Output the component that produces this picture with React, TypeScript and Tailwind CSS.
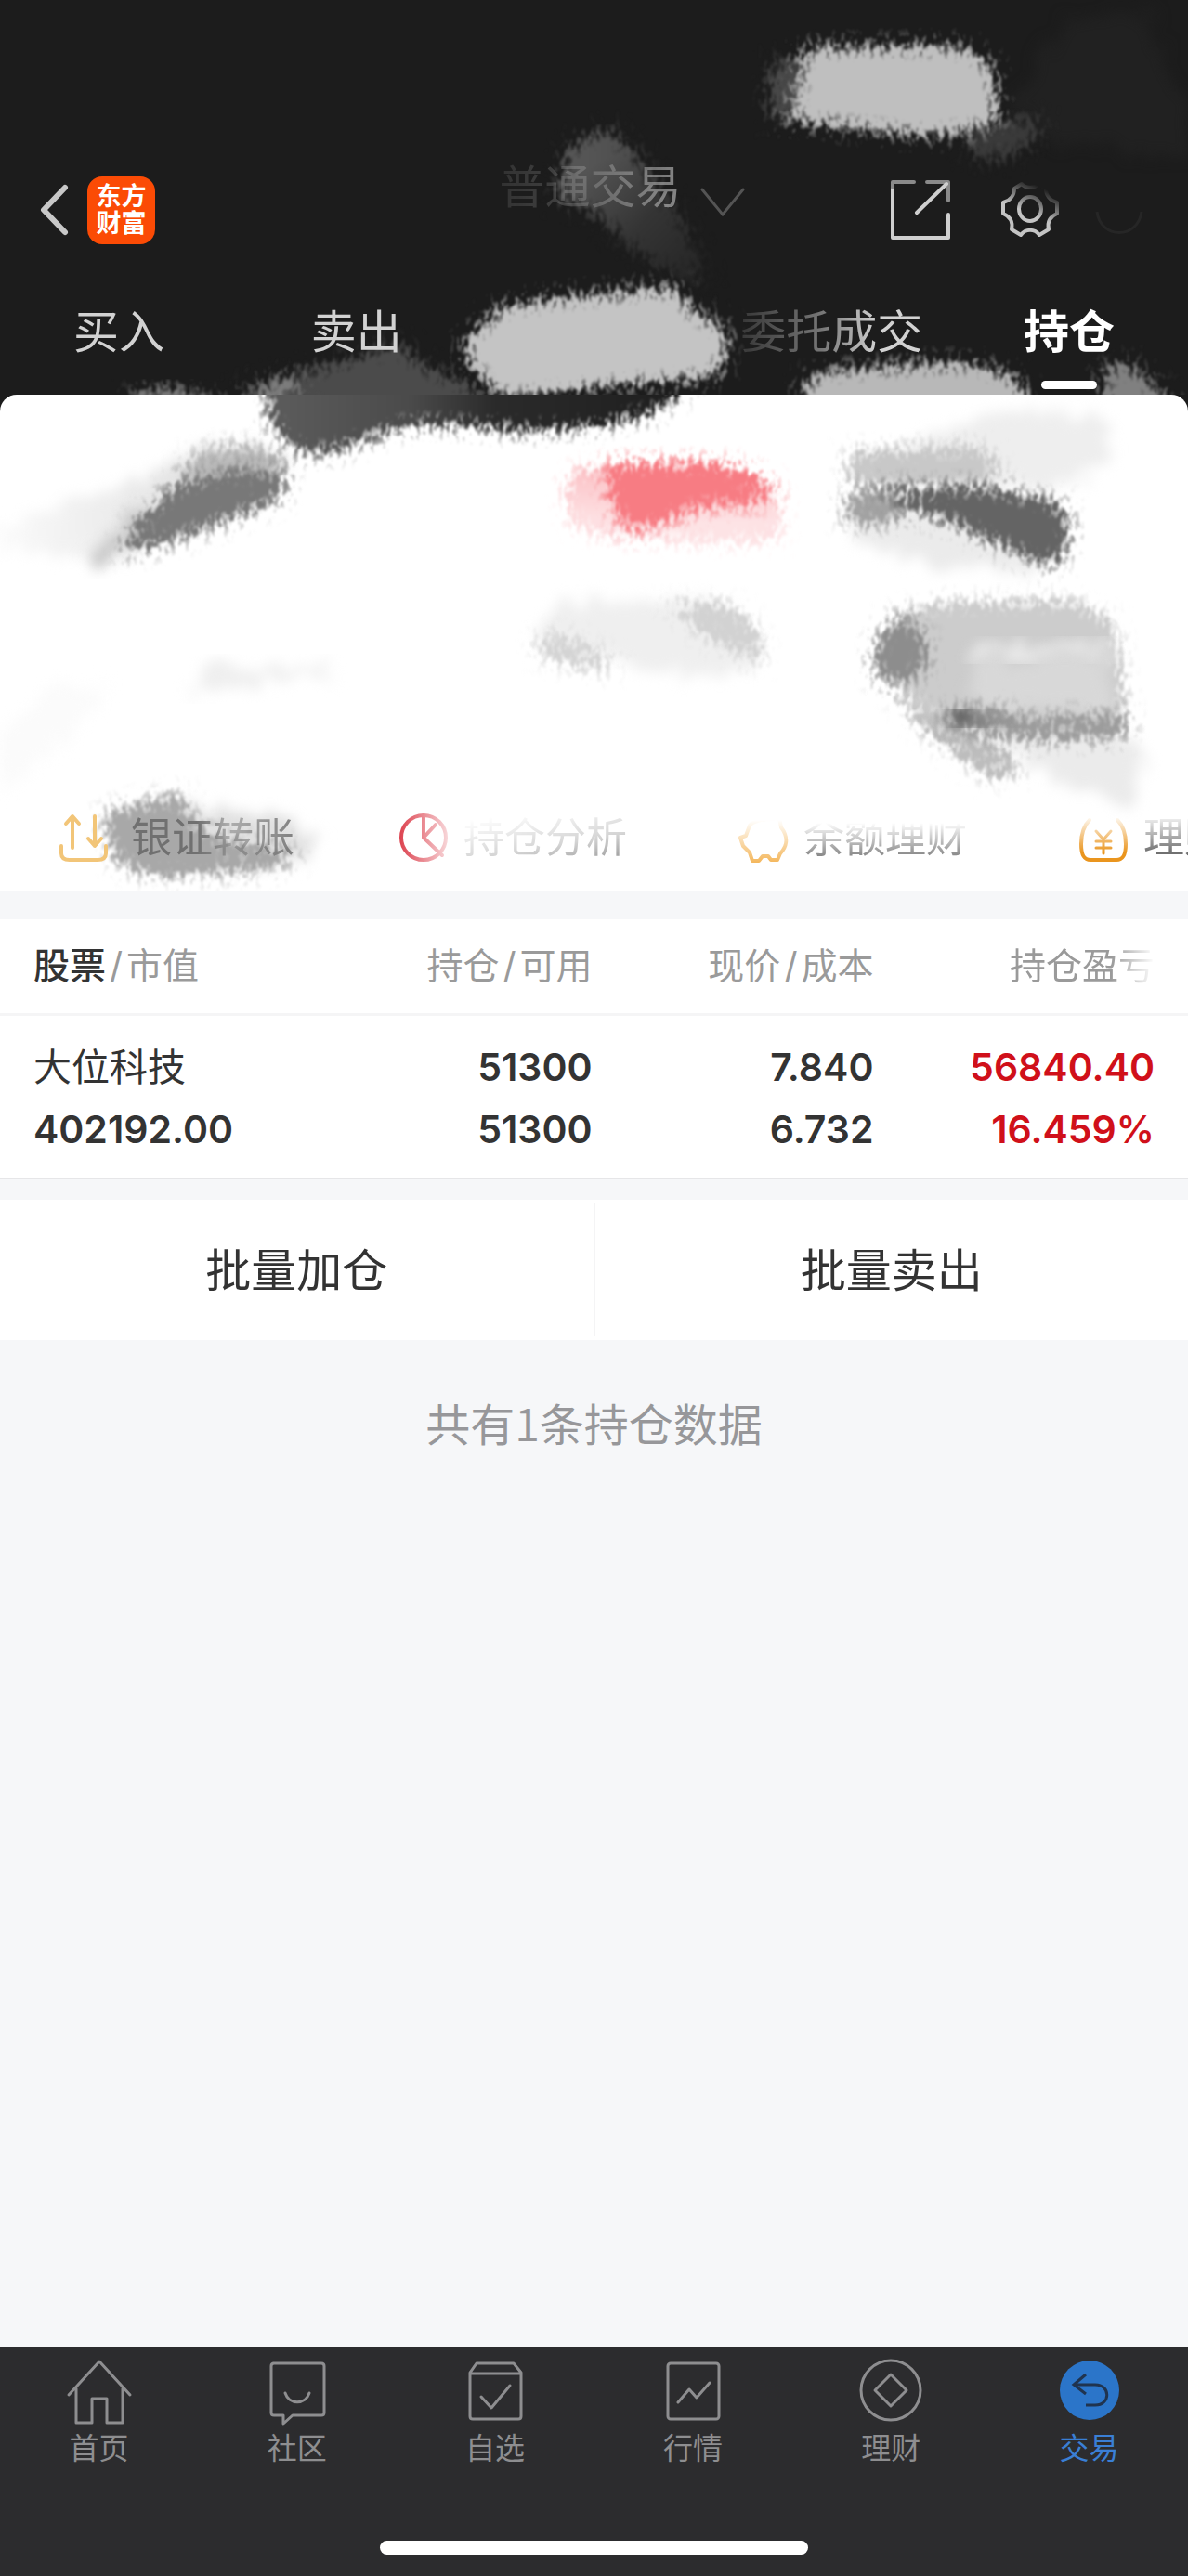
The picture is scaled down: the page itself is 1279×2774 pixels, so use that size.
import React from "react";

function SmearFilters() {
  return (
    <defs>
      <filter id="brush" x="-30%" y="-60%" width="160%" height="220%" colorInterpolationFilters="sRGB">
        <feTurbulence type="fractalNoise" baseFrequency="0.19 0.1" numOctaves="3" seed="4" result="noise" />
        <feColorMatrix in="noise" type="matrix" values="0 0 0 0 0  0 0 0 0 0  0 0 0 0 0  3.4 0 0 0 -1.2" result="grain" />
        <feGaussianBlur in="SourceGraphic" stdDeviation="11" result="soft" />
        <feComposite in="soft" in2="grain" operator="arithmetic" k1="0" k2="2.1" k3="1" k4="-0.98" result="mask" />
        <feMorphology in="SourceGraphic" operator="dilate" radius="20" result="wide" />
        <feComposite in="wide" in2="mask" operator="in" result="painted" />
        <feGaussianBlur in="painted" stdDeviation="1" />
      </filter>
      <filter id="haze" x="-20%" y="-40%" width="140%" height="180%" colorInterpolationFilters="sRGB">
        <feTurbulence type="fractalNoise" baseFrequency="0.06 0.04" numOctaves="3" seed="9" result="noise" />
        <feDisplacementMap in="SourceGraphic" in2="noise" scale="44" xChannelSelector="R" yChannelSelector="G" result="moved" />
        <feGaussianBlur in="moved" stdDeviation="7" />
      </filter>
      <linearGradient id="darkFade" x1="0" x2="1" y1="0" y2="0">
        <stop offset="0" stopColor="#5a5a5a" />
        <stop offset="0.3" stopColor="#4a4a4a" />
        <stop offset="0.5" stopColor="#2a2a2a" />
        <stop offset="1" stopColor="#1c1c1c" />
      </linearGradient>
      <linearGradient id="streak" x1="0" x2="1" y1="0" y2="1">
        <stop offset="0" stopColor="#5e5e5e" />
        <stop offset="0.45" stopColor="#343434" />
        <stop offset="1" stopColor="#1c1c1c" />
      </linearGradient>
      <linearGradient id="pinkFade" x1="0" x2="0" y1="0" y2="1">
        <stop offset="0" stopColor="#fab4b9" />
        <stop offset="1" stopColor="#fde3e5" />
      </linearGradient>
      <linearGradient id="washLeft" x1="0" x2="1" y1="0" y2="0">
        <stop offset="0" stopColor="#fafafa" />
        <stop offset="0.5" stopColor="#e9e9e9" />
        <stop offset="1" stopColor="#dadada" />
      </linearGradient>
    </defs>
  );
}

function HeaderSmears() {
  return (
    <svg className="pointer-events-none absolute inset-0 h-full w-full" viewBox="0 0 1279 425" preserveAspectRatio="none" aria-hidden="true">
      <SmearFilters />
      <path d="M1150 20L1230 10L1279 120V170L1110 150L1090 110Z" fill="#212121" filter="url(#haze)" />
      <path d="M1030 130L1125 128L1110 155L1075 172L1045 165Z" fill="#3a3a3a" filter="url(#brush)" />
      <path d="M832 66L890 60L890 128L828 130Z" fill="#484848" filter="url(#brush)" />
      <path d="M864 52L1030 50L1068 70L1074 134L1040 140L1000 146L930 138L845 128L862 95Z" fill="#bfbfbf" filter="url(#brush)" />
      <path d="M600 215L612 160L655 138L685 168L718 215L738 245L766 315L690 275L640 226Z" fill="url(#streak)" filter="url(#brush)" />
      <path d="M542 330L620 320L730 310L744 336L784 354L776 404L720 410L640 416L543 430L520 408L500 385L503 366Z" fill="#c4c4c4" filter="url(#brush)" />
      <path d="M130 440L150 420L200 420L260 440Z" fill="#777" filter="url(#brush)" />
      <path d="M258 455V422L300 406L370 390L432 370L452 393L510 418L540 455Z" fill="#4b4b4b" filter="url(#brush)" />
      <path d="M264 440L285 416L330 402L305 440Z" fill="#7c7c7c" filter="url(#brush)" />
      <path d="M864 455V413L890 400L1000 392L1050 392L1094 408L1120 455Z" fill="#b8b8b8" filter="url(#brush)" />
      <path d="M1182 400L1212 390L1275 445H1196Z" fill="#808080" filter="url(#brush)" />
    </svg>
  );
}

function CardSmears() {
  return (
    <svg className="pointer-events-none absolute inset-0 h-full w-full" viewBox="0 425 1279 535" preserveAspectRatio="none" aria-hidden="true">
      <path d="M284 380L290 452L320 488L358 486L438 456L520 458L560 463L640 459L705 443L742 415V380Z" fill="url(#darkFade)" filter="url(#brush)" />

      <path d="M0 565L100 535L190 495L240 482L300 488L300 515L200 560L90 600L0 590Z" fill="url(#washLeft)" filter="url(#haze)" />
      <path d="M185 530L208 490L260 478L308 492L302 530Z" fill="#b8b8b8" filter="url(#brush)" />
      <path d="M90 600L150 550L190 550L130 602Z" fill="#c9c9c9" filter="url(#haze)" />
      <path d="M190 522L250 508L304 508L309 530L285 543L250 558L180 584L130 598L140 574Z" fill="#787878" filter="url(#brush)" />

      <path d="M608 512L650 502L800 506L843 538L840 580L770 584L660 578L616 566Z" fill="url(#pinkFade)" filter="url(#brush)" />
      <path d="M650 502L690 500L780 500L832 522L828 540L760 544L715 560L680 574L662 554Z" fill="#f77c83" filter="url(#brush)" />

      <path d="M950 490L1070 440L1190 450L1200 490L1150 525L1060 530Z" fill="#eeeeee" filter="url(#haze)" />
      <path d="M912 486L1055 482L1080 504L1060 524L960 526L914 522Z" fill="#c8c8c8" filter="url(#brush)" />
      <path d="M912 552L970 540L1128 602L1100 618L1040 614L924 588Z" fill="#ebebeb" filter="url(#haze)" />
      <path d="M912 530L965 524L994 546L945 566L908 562Z" fill="#a2a2a2" filter="url(#brush)" />
      <path d="M940 526L1060 525L1144 542L1153 578L1136 612L1085 590L1030 564L975 545Z" fill="#646464" filter="url(#brush)" />

      <path d="M578 690L584 655L640 648L770 648L812 682L818 716L780 728L650 716Z" fill="#efefef" filter="url(#haze)" />
      <path d="M715 648L788 652L822 688L818 715L760 684Z" fill="#d2d2d2" filter="url(#brush)" />
      <path d="M576 690L600 682L665 712L655 724L584 708Z" fill="#d4d4d4" filter="url(#brush)" />
      <path d="M195 746L230 718L350 716L365 722L230 742Z" fill="#efefef" filter="url(#haze)" />
      <path d="M0 790L50 740L120 735L90 780L0 850Z" fill="#fbfbfb" filter="url(#haze)" />

      <path d="M1010 780L1205 780L1238 830L1210 870L1100 820Z" fill="#ebebeb" filter="url(#haze)" />
      <path d="M945 722L1005 758L1105 828L1070 840L1000 790Z" fill="#bdbdbd" filter="url(#brush)" />
      <path d="M940 712L958 668L1000 650L1155 647L1200 670L1214 790L1090 788L1010 778L950 728Z" fill="#cccccc" filter="url(#brush)" />
      <path d="M1050 706L1190 704L1200 768L1090 760L1040 750Z" fill="#d8d8d8" filter="url(#haze)" />
      <path d="M1045 696L1200 692V704L1045 708Z" fill="#ebebeb" filter="url(#haze)" />
      <path d="M938 716L954 674L980 662L1000 700L990 730L952 734Z" fill="#8d8d8d" filter="url(#brush)" />
      <path d="M1008 764L1060 762L1110 774L1214 770L1212 794L1120 796L1020 786Z" fill="#9c9c9c" filter="url(#brush)" />
      <path d="M1018 768L1070 773L1100 778L1020 779Z" fill="#484848" filter="url(#haze)" />

      <path d="M195 866L300 880L350 905L330 925L210 925Z" fill="#e0e0e0" filter="url(#haze)" />
      <path d="M110 876L158 864L198 854L204 882L240 908L320 914L312 930L270 938L160 944L120 924Z" fill="#a8a8a8" filter="url(#brush)" />
    </svg>
  );
}

function Header() {
  const fade = "[mask-image:linear-gradient(to_right,rgba(0,0,0,0.12)_0%,rgba(0,0,0,0.25)_55%,rgba(0,0,0,0.6)_100%)]";
  return (
    <header className="relative overflow-hidden pt-[188px] text-[#d2d2d2]">
      <HeaderSmears />
      <div className="relative flex h-19 items-center justify-between pr-12 pl-10">
        <div className="flex flex-1 items-center gap-[18px]">
          <button type="button" aria-label="返回" className="shrink-0">
            <svg width="36" height="60" viewBox="0 0 36 60" fill="none" stroke="#c8c8c8" strokeWidth="6" strokeLinecap="round" strokeLinejoin="round">
              <path d="M30 6L7 30L30 54" />
            </svg>
          </button>
          <div className="flex h-[73px] w-[73px] items-center justify-center rounded-2xl bg-[#fb4b05] text-center text-[27px] leading-[29px] font-bold text-white">
            东方<br />财富
          </div>
        </div>
        <button type="button" className="mb-12 flex items-center gap-5 pl-17">
          <span className={`text-[49px] leading-[60px] ${fade}`}>普通交易</span>
          <svg width="48" height="34" viewBox="0 0 48 34" fill="none" stroke="#545454" strokeWidth="3" strokeLinecap="round" className="mt-8">
            <path d="M2 3L24 30L46 3" />
          </svg>
        </button>
        <div className="flex flex-1 items-center justify-end gap-[54px]">
          <button type="button" aria-label="分享">
            <svg width="64" height="64" viewBox="0 0 64 64" fill="none" stroke="#cfcfcf" strokeWidth="4" strokeLinecap="round" strokeLinejoin="round">
              <path d="M2 8V62H62V37" />
              <path d="M2 8V2H25M39 2H62V22" stroke="#8a8a8a" />
              <path d="M28 35L60 4" />
            </svg>
          </button>
          <button type="button" aria-label="设置" className="[mask-image:linear-gradient(205deg,transparent_18%,black_55%)]">
            <svg width="64" height="64" viewBox="0 0 64 64" fill="none" stroke="#c4c4c4" strokeWidth="4" strokeLinejoin="round">
              <path d="M15 9L23 4C27 9 37 9 41 4L49 9C49 16 53 22 61 24V36C54 39 50 44 52 53L42 59C37 52 27 52 22 59L12 53C14 44 10 39 3 36V24C11 22 15 16 15 9Z" />
              <ellipse cx="32" cy="31" rx="12" ry="13" />
            </svg>
          </button>
          <svg width="52" height="64" viewBox="0 0 52 64" fill="none" stroke="#262626" strokeWidth="3" className="-ml-4" aria-hidden="true">
            <path d="M2 34C6 64 46 64 50 34" />
          </svg>
        </div>
      </div>
      <nav className="relative mt-14 grid h-[105px] grid-cols-5 justify-items-center text-[49px] leading-[76px]">
        <a href="#buy">买入</a>
        <a href="#sell" className="[mask-image:linear-gradient(165deg,black_70%,rgba(0,0,0,0.3)_85%)]">卖出</a>
        <a href="#orders" className="col-start-4 [mask-image:linear-gradient(to_right,rgba(0,0,0,0.15)_0%,rgba(0,0,0,0.5)_45%,black_75%)]">委托成交</a>
        <a href="#positions" aria-current="page" className="flex flex-col items-center font-bold text-white">
          持仓
          <span className="mt-[14px] h-[9px] w-15 rounded-full bg-white" />
        </a>
      </nav>
    </header>
  );
}

const quickLinks = [
  {
    label: "银证转账",
    gap: "gap-6",
    tone: "text-[#707070] [mask-image:linear-gradient(to_right,black_40%,rgba(0,0,0,0.45)_60%,rgba(0,0,0,0.85)_100%)]",
    icon: (
      <g stroke="#f2c578" strokeWidth="4">
        <path d="M3 36V44Q3 51 12 51H42Q51 51 51 44V36" />
        <path d="M15 38V5M8 12L15 4L22 12M39 4V36M32 28L39 36L46 28" />
      </g>
    ),
    iconTone: "",
  },
  {
    label: "持仓分析",
    gap: "gap-4",
    tone: "text-[#888] [mask-image:linear-gradient(170deg,transparent_15%,rgba(0,0,0,0.35)_60%,black_100%)]",
    icon: (
      <g stroke="#dc3f4c" strokeWidth="4">
        <circle cx="27" cy="27" r="24" />
        <path d="M27 3V27L47 46M27 27L40 13" />
      </g>
    ),
    iconTone: "[mask-image:linear-gradient(to_left,rgba(0,0,0,0.2)_0%,black_100%)]",
  },
  {
    label: "余额理财",
    gap: "gap-4",
    tone: "text-[#808080] [mask-image:linear-gradient(to_bottom,transparent_25%,black_85%)]",
    icon: (
      <path stroke="#f4b75c" strokeWidth="4" d="M12 14C18 6 36 8 44 6L46 16C55 28 51 38 45 44L42 51H35L32 47H26L22 52H15L12 43L5 36L2 27L8 25Z" />
    ),
    iconTone: "[mask-image:linear-gradient(to_bottom,transparent_15%,black_100%)]",
  },
  {
    label: "理财",
    gap: "gap-4",
    tone: "text-[#707070] [mask-image:linear-gradient(to_bottom,transparent_10%,black_75%)]",
    icon: (
      <g stroke="#ea951e" strokeWidth="4">
        <path d="M12 8C6 14 3 24 3 34C3 46 6 51 13 51H41C48 51 51 46 51 34C51 24 48 14 42 8" />
        <path d="M19 20L27 29L35 20M27 29V44M19 31H35M19 38H35" strokeWidth="3" />
      </g>
    ),
    iconTone: "[mask-image:linear-gradient(to_bottom,transparent_5%,black_80%)]",
  },
];

function AccountCard() {
  return (
    <section className="relative h-[535px] overflow-hidden rounded-t-[18px] bg-white">
      <CardSmears />
      <div className="relative flex h-full items-end overflow-hidden pb-[26px] pl-[63px]">
        {quickLinks.map((link) => (
          <a key={link.label} href={`#${link.label}`} className={`flex w-[366px] shrink-0 items-center ${link.gap}`}>
            <svg width="54" height="54" viewBox="0 0 54 54" fill="none" strokeLinecap="round" strokeLinejoin="round" className={link.iconTone} aria-hidden="true">
              {link.icon}
            </svg>
            <span className={`text-[44px] leading-[64px] ${link.tone}`}>{link.label}</span>
          </a>
        ))}
      </div>
    </section>
  );
}

function Slash() {
  return <span className="mx-1">/</span>;
}

function Positions() {
  return (
    <table className="mt-[30px] w-full table-fixed border-b border-[#e6e6e8] bg-white">
      <colgroup>
        <col className="w-[25%]" />
        <col className="w-[25%]" />
        <col className="w-[24%]" />
        <col className="w-[26%]" />
      </colgroup>
      <thead>
        <tr className="h-[102px] border-b-3 border-[#f5f5f6] text-right text-[39px] leading-[60px] text-[#9a9a9a]">
          <th scope="col" className="pl-9 text-left font-normal">
            <span className="font-medium text-[#333]">股票</span><Slash />市值
          </th>
          <th scope="col" className="pr-0.5 font-normal">持仓<Slash />可用</th>
          <th scope="col" className="pr-1.5 font-normal">现价<Slash />成本</th>
          <th scope="col" className="pr-9 font-normal">
            <span className="[mask-image:linear-gradient(to_right,black_70%,transparent_100%)]">持仓盈亏</span>
          </th>
        </tr>
      </thead>
      <tbody>
        <tr className="h-[177px] text-right text-[41px] leading-[67px] font-semibold text-[#333]">
          <td className="pt-1 pl-9 text-left">
            <div className="font-normal">大位科技</div>
            <div>402192.00</div>
          </td>
          <td className="pt-1 pr-0.5"><div>51300</div><div>51300</div></td>
          <td className="pt-1 pr-1.5"><div>7.840</div><div>6.732</div></td>
          <td className="pt-1 pr-9 text-[#d0101a]"><div>56840.40</div><div>16.459%</div></td>
        </tr>
      </tbody>
    </table>
  );
}

const tabs = [
  {
    label: "首页",
    icon: <path d="M3 42L36 6L69 42M11 35V72H28V46H44V72H61V35" />,
  },
  {
    label: "社区",
    icon: (
      <>
        <path d="M10 8H62Q65 8 65 11V61Q65 64 62 64H31L21 73V64H11Q8 64 8 61V11Q8 8 11 8Z" />
        <path d="M23 40C27 53 45 53 49 40" />
      </>
    ),
  },
  {
    label: "自选",
    icon: (
      <>
        <path d="M9 18L16 8H56L64 18V65Q64 68 61 68H12Q9 68 9 65ZM9 19H64" />
        <path d="M21 44L32 56L52 32" />
      </>
    ),
  },
  {
    label: "行情",
    icon: (
      <>
        <rect x="9" y="8" width="55" height="60" rx="3" />
        <path d="M20 50L32 36L40 45L54 29" />
      </>
    ),
  },
  {
    label: "理财",
    icon: (
      <>
        <circle cx="36" cy="37" r="32" />
        <path d="M36 20L53 37L36 54L19 37Z" />
      </>
    ),
  },
];

function BottomBar() {
  return (
    <footer className="flex h-[247px] flex-col items-center justify-between bg-[#2c2c2e] pt-[10px] pb-[23px]">
      <nav className="grid w-full grid-cols-6 text-[32px] leading-[48px] text-[#8e8e90]">
        {tabs.map((tab) => (
          <a key={tab.label} href={`#${tab.label}`} className="flex flex-col items-center">
            <svg width="72" height="76" viewBox="0 0 72 76" fill="none" stroke="currentColor" strokeWidth="3" strokeLinejoin="round" strokeLinecap="round" aria-hidden="true">
              {tab.icon}
            </svg>
            {tab.label}
          </a>
        ))}
        <a href="#trade" aria-current="page" className="flex flex-col items-center text-[#3a7fd5]">
          <svg width="72" height="76" viewBox="0 0 72 76" fill="none" aria-hidden="true">
            <circle cx="37" cy="37" r="32" fill="#2b75c9" />
            <path d="M33 20L20 31L33 41M20 31H43C60 31 60 53 43 53H33" stroke="#20344f" strokeWidth="3" />
          </svg>
          交易
        </a>
      </nav>
      <div className="h-[15px] w-[36%] rounded-full bg-white" />
    </footer>
  );
}

export default function App() {
  return (
    <div className="flex min-h-screen flex-col bg-[#f6f7f9] font-['Inter','Noto_Sans_CJK_SC',sans-serif]">
      <div className="bg-[#1c1c1c]">
        <Header />
        <AccountCard />
      </div>
      <main className="flex-1">
        <Positions />
        <div className="mt-[22px] flex h-[151px] items-center bg-white text-[49px] leading-[74px] text-[#333]">
          <button type="button" className="h-36 flex-1 border-r-2 border-[#f4f4f5] pt-1">批量加仓</button>
          <button type="button" className="h-36 flex-1 pt-1">批量卖出</button>
        </div>
        <p className="mt-[52px] text-center font-['Noto_Sans_CJK_SC',sans-serif] text-[48px] leading-[72px] text-[#97979a]">共有1条持仓数据</p>
      </main>
      <BottomBar />
    </div>
  );
}
